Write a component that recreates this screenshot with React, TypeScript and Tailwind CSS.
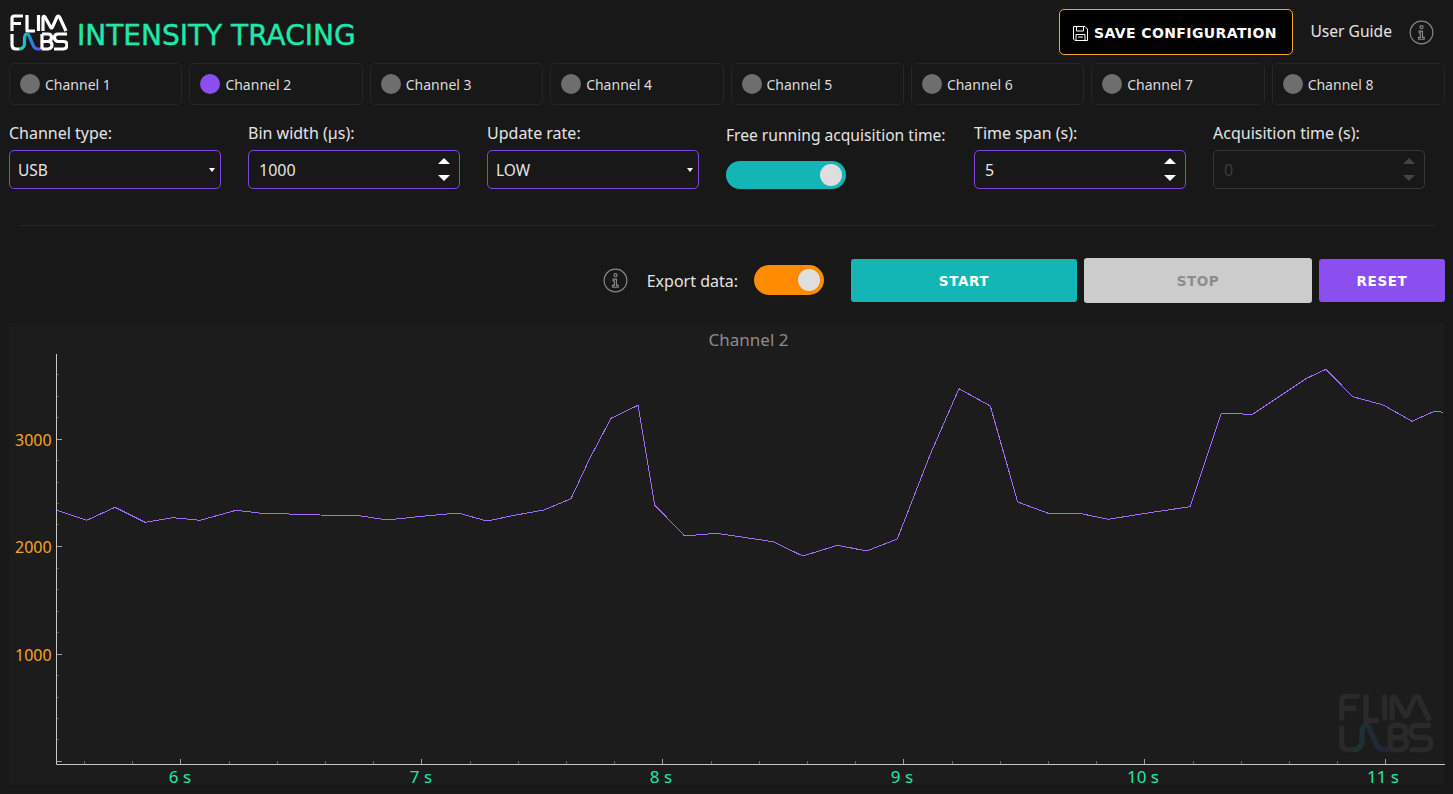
import React from "react";

const channels = ["Channel 1", "Channel 2", "Channel 3", "Channel 4", "Channel 5", "Channel 6", "Channel 7", "Channel 8"];

const linePoints =
  "0,156.3 29.7,166.3 58,153.3 88,168.3 116,163.7 143,166.3 179,156.3 204.7,159.3 243,160.3 263,161 301,161.5 330,166 368,162 401,159 430,167 459,161 487,156 514,144.7 533,104 554,64.3 581,51.3 597.7,151 627.7,182 659.7,179.3 716,187.7 745.7,202 780.7,191.3 809.7,197 840.3,185 873,101 902,34.7 933.3,52 960.7,148 991.3,159.3 1022.3,159.3 1051.3,165.3 1086,159.7 1133,152.7 1164.3,59.3 1195.7,60.3 1223,42 1249.7,24.3 1269,15.3 1295.7,42.7 1326.3,51 1355,67.3 1377.3,57.3 1386.3,58.3";

const LogoMark = ({ muted }: { muted?: boolean }) => {
  const c = muted ? "#2a2a2a" : "#ffffff";
  return (
    <svg viewBox="0 0 58 37" className="h-full w-full" fill="none" strokeWidth="3.2" strokeLinejoin="round">
      <defs>
        <linearGradient id={muted ? "wave-m" : "wave"} x1="0" x2="1" y1="0" y2="0">
          <stop offset="0" stopColor={muted ? "#203430" : "#1fe6b0"} />
          <stop offset="0.5" stopColor={muted ? "#202c34" : "#1d8fd0"} />
          <stop offset="1" stopColor={muted ? "#26203a" : "#7c3aed"} />
        </linearGradient>
      </defs>
      <path d="M13 2H4.5Q2 2 2 4.5V17M2 9.5H11" stroke={c} />
      <path d="M17 1V17H25" stroke={c} />
      <path d="M28.5 1V17" stroke={c} />
      <path d="M33 17V4Q33 1.5 35 3L40.5 13Q41.5 15 42.5 13L47 3Q49 1 50 4L56 17" stroke={c} />
      <path d="M2 20V31Q2 35 6 35H9" stroke={c} />
      <path d="M9 35Q13 35 14.5 31V24Q15 20 17 20Q19 20 20 24L23 31Q24.5 35 28 35H32" stroke={muted ? "url(#wave-m)" : "url(#wave)"} />
      <path d="M32 20V35M32 20H38Q41.5 20 41.5 23.5T38 27.5H32M38 27.5Q42 27.5 42 31T38 35H32" stroke={c} />
      <path d="M57 20H48Q44.5 20 44.5 23.5T48 27.5H53.5Q57 27.5 57 31T53.5 35H44" stroke={c} />
    </svg>
  );
};

const InfoIcon = () => (
  <svg viewBox="0 0 26 26" className="h-[25px] w-[25px]" fill="none" stroke="#8a8a8a" strokeWidth="1.2">
    <circle cx="13" cy="13" r="11.8" />
    <circle cx="13" cy="7.5" r="1.6" />
    <path d="M10.5 11.5H14V18H15.8V20H10V18H11.8V13.3H10.5Z" />
  </svg>
);

const SaveIcon = () => (
  <svg viewBox="0 0 17 17" className="h-[17px] w-[17px]" fill="none" stroke="#ffffff" strokeWidth="1">
    <path d="M1.5 1.5H13L15.5 4V15.5H3L1.5 14Z" />
    <path d="M4.5 1.5V6H11.5V1.5" />
    <path d="M4 15.5V9.5H13V15.5" />
    <path d="M6 12H11" />
  </svg>
);

const Arrows = ({ disabled }: { disabled?: boolean }) => (
  <div className="flex flex-col gap-[11px]">
    <div className={`h-0 w-0 border-x-[6px] border-b-[6px] border-x-transparent ${disabled ? "border-b-[#444444]" : "border-b-white"}`} />
    <div className={`h-0 w-0 border-x-[6px] border-t-[6px] border-x-transparent ${disabled ? "border-t-[#444444]" : "border-t-white"}`} />
  </div>
);

const Field = ({ label, children }: { label: string; children: React.ReactNode }) => (
  <div className="flex w-[212px] flex-col gap-[7px]">
    <p className="text-[16px] leading-[20px] text-[#e4e4e4]">{label}</p>
    {children}
  </div>
);

const Select = ({ value }: { value: string }) => (
  <div className="flex h-[39px] items-center justify-between rounded-[5px] border border-[#8246e0] pl-[8px] pr-[5px] text-[15.5px] text-[#e4e4e4]">
    <span className="pt-[2px]">{value}</span>
    <div className="h-0 w-0 border-x-[3.5px] border-t-[4px] border-x-transparent border-t-white" />
  </div>
);

const NumberBox = ({ value, disabled }: { value: string; disabled?: boolean }) => (
  <div
    className={`flex h-[39px] items-center justify-between rounded-[5px] border pl-[10px] pr-[9px] text-[16px] ${
      disabled ? "border-[#363636] text-[#3c3c3c]" : "border-[#8246e0] text-[#e4e4e4]"
    }`}
  >
    <span>{value}</span>
    <Arrows disabled={disabled} />
  </div>
);

const Toggle = ({ color }: { color: string }) => (
  <div className={`flex items-center justify-end rounded-full pr-[4px] ${color}`}>
    <div className="h-[22px] w-[22px] rounded-full bg-[#dedede]" />
  </div>
);

const yTicks = [
  { y: 375, major: false },
  { y: 397, major: false },
  { y: 418, major: false },
  { y: 440, major: true },
  { y: 461, major: false },
  { y: 483, major: false },
  { y: 504, major: false },
  { y: 525, major: false },
  { y: 547, major: true },
  { y: 569, major: false },
  { y: 590, major: false },
  { y: 612, major: false },
  { y: 633, major: false },
  { y: 655, major: true },
  { y: 676, major: false },
  { y: 698, major: false },
  { y: 719, major: false },
  { y: 740, major: false },
  { y: 762, major: true },
];

const xLabels = [
  { x: 180, label: "6 s" },
  { x: 421, label: "7 s" },
  { x: 661, label: "8 s" },
  { x: 902, label: "9 s" },
  { x: 1143, label: "10 s" },
  { x: 1383, label: "11 s" },
];

const App = () => {
  return (
    <div className="flex h-[794px] w-[1453px] flex-col overflow-hidden bg-[#181818] font-['Noto_Sans',sans-serif]">
      <div className="flex h-[63px] items-center justify-between pl-[10px] pr-[19px] pt-px">
        <div className="flex items-center gap-[9px]">
          <div className="mt-px h-[37px] w-[58px]">
            <LogoMark />
          </div>
          <h1 className="mt-[7px] text-[28px] leading-none text-[#1fe8ab] [-webkit-text-stroke:0.4px_#1fe8ab] font-['DejaVu_Sans',sans-serif]">INTENSITY TRACING</h1>
        </div>
        <div className="flex items-center">
          <div className="flex h-[46px] w-[234px] items-center justify-center gap-[5px] rounded-[5px] border border-[#f5a623] bg-black pr-[4px] pt-[2px]">
            <SaveIcon />
            <span className="text-[14px] font-bold tracking-[0.4px] text-white font-['DejaVu_Sans',sans-serif]">SAVE CONFIGURATION</span>
          </div>
          <span className="ml-[17px] text-[15.6px] text-[#e4e4e4]">User Guide</span>
          <div className="ml-[17px]">
            <InfoIcon />
          </div>
        </div>
      </div>

      <div className="flex gap-[7px] pl-[9px] pr-[8px]">
        {channels.map((name, i) => (
          <div key={name} className="flex h-[42px] flex-1 items-center gap-[5px] rounded-[5px] border border-[#252525] pl-[10px] text-[14px] text-[#dcdcdc]">
            <div className={`h-[20px] w-[20px] rounded-full ${i === 1 ? "bg-[#8b4ff0]" : "bg-[#6e6e6e]"}`} />
            <span>{name}</span>
          </div>
        ))}
      </div>

      <div className="flex pl-[9px] pr-[28px] pt-[18px]">
        <div className="mr-[27px]">
          <Field label="Channel type:">
            <Select value="USB" />
          </Field>
        </div>
        <div className="mr-[27px]">
          <Field label="Bin width (µs):">
            <NumberBox value="1000" />
          </Field>
        </div>
        <div className="mr-[27px]">
          <Field label="Update rate:">
            <Select value="LOW" />
          </Field>
        </div>
        <div className="mr-[28px] flex w-[220px] flex-col gap-[16px] pt-[2px]">
          <p className="whitespace-nowrap text-[15.6px] leading-[20px] text-[#e4e4e4]">Free running acquisition time:</p>
          <div className="w-[120px]">
            <Toggle color="h-[28px] bg-[#14b5b5]" />
          </div>
        </div>
        <div className="mr-[27px]">
          <Field label="Time span (s):">
            <NumberBox value="5" />
          </Field>
        </div>
        <Field label="Acquisition time (s):">
          <NumberBox value="0" disabled />
        </Field>
      </div>

      <div className="ml-[20px] mr-[18px] mt-[36px] h-px bg-[#2a2a2a]" />

      <div className="flex items-center justify-end pr-[8px] pt-[32px]">
        <InfoIcon />
        <span className="ml-[19px] text-[16px] text-[#e4e4e4]">Export data:</span>
        <div className="mb-[2px] ml-[16px] w-[70px]">
          <Toggle color="h-[30px] bg-[#ff8c00]" />
        </div>
        <button className="ml-[27px] h-[43px] w-[226px] rounded-[3px] bg-[#14b5b5] pt-px text-[13.5px] font-bold tracking-[0.6px] text-white font-['DejaVu_Sans',sans-serif]">START</button>
        <button className="ml-[7px] h-[45px] w-[228px] rounded-[3px] bg-[#cccccc] pt-px text-[13.5px] font-bold tracking-[0.6px] text-[#8c8c8c] font-['DejaVu_Sans',sans-serif]">STOP</button>
        <button className="ml-[7px] h-[43px] w-[126px] rounded-[3px] bg-[#8b4ff0] pt-px text-[13.5px] font-bold tracking-[0.6px] text-white font-['DejaVu_Sans',sans-serif]">RESET</button>
      </div>

      <div className="relative mx-[9px] mt-[20px] h-[462px] bg-[#1c1c1c]">
        <p className="pl-[44px] pt-[6px] text-center text-[17px] leading-[22px] text-[#8c8c8c]">Channel 2</p>

        <svg className="absolute left-0 top-0 h-[462px] w-[1436px]" viewBox="9 323 1436 462" fill="none">
          <path d="M56.5 354V764.5H1445" stroke="#c8c8c8" strokeWidth="1" />
          {yTicks.map((t) => (
            <path key={t.y} d={`M57 ${t.y - 0.5}H${t.major ? 62 : 59}`} stroke={t.major ? "#a0a0a0" : "#555555"} />
          ))}
          {Array.from({ length: 28 }, (_, i) => 84 + i * 48.2).map((x, i) => (
            <path key={i} d={`M${Math.round(x) + 0.5} 764V${(i - 2) % 5 === 0 ? 759 : 761}`} stroke={(i - 2) % 5 === 0 ? "#a0a0a0" : "#666666"} />
          ))}
          <polyline points={linePoints} transform="translate(57 354)" stroke="#a56bff" strokeWidth="1" strokeLinejoin="round" shapeRendering="crispEdges" />
        </svg>

        <div className="absolute bottom-[32px] right-[11px] h-[60px] w-[95px]">
          <LogoMark muted />
        </div>

        {[
          { y: 117, label: "3000" },
          { y: 224, label: "2000" },
          { y: 332, label: "1000" },
        ].map((t) => (
          <span key={t.label} className="absolute left-[6px] text-[16px] leading-[20px] text-[#f5a623]" style={{ top: t.y - 10 }}>
            {t.label}
          </span>
        ))}

        {xLabels.map((t) => (
          <span key={t.label} className="absolute top-[444px] -translate-x-1/2 text-[17px] leading-[20px] text-[#1fe8ab]" style={{ left: t.x - 9 }}>
            {t.label}
          </span>
        ))}
      </div>
    </div>
  );
};

export default App;
